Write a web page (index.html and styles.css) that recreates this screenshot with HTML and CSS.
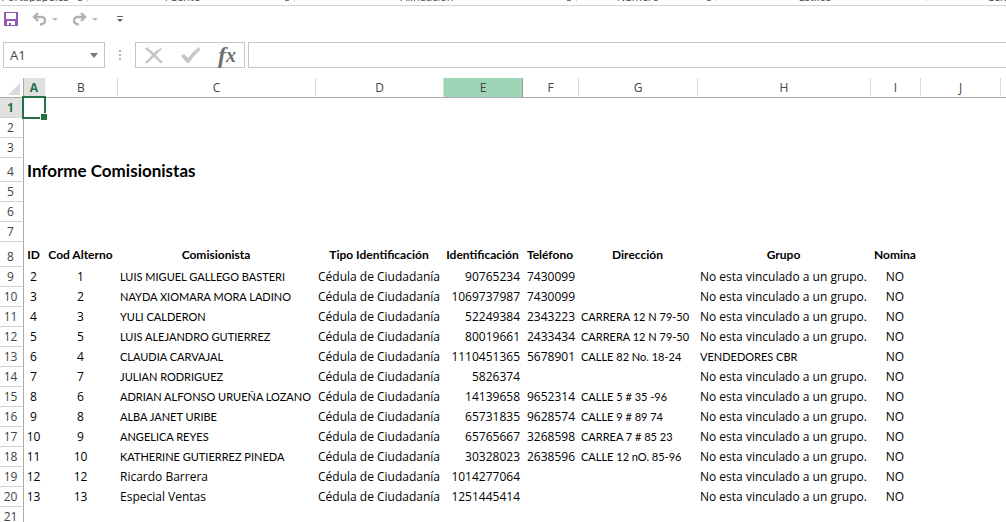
FILE: index.html
```
<!DOCTYPE html>
<html lang="es">
<head>
<meta charset="utf-8">
<title>Informe Comisionistas</title>
<link rel="stylesheet" href="styles.css">
</head>
<body>
<div class="ribbon">
  <div class="group"><span class="label">Portapapeles</span><i class="launcher"></i></div>
  <div class="group"><span class="label">Fuente</span><i class="launcher"></i></div>
  <div class="group"><span class="label">Alineación</span><i class="launcher"></i></div>
  <div class="group"><span class="label">Número</span><i class="launcher"></i></div>
  <div class="group"><span class="label">Estilos</span></div>
  <div class="group"><span class="label">Celdas</span></div>
</div>

<div class="quick">
  <button class="save" aria-label="Guardar"><svg width="14" height="14" viewBox="0 0 14 14"><path fill="#8e5bb0" fill-rule="evenodd" d="M0 0H14V14H0ZM2 1V7H12V1ZM3 9V13H5V11H7V13H11V9Z"/></svg></button>
  <button class="undo" aria-label="Deshacer"><svg width="15" height="14" viewBox="0 0 15 14"><path fill="none" stroke="#b1b1b1" stroke-width="2.400" d="M6 1L2 5L6 9M2 5H9Q13 5 13 8.500Q13 12 8 12.500"/></svg></button>
  <button class="drop" aria-label="Opciones de deshacer"><svg width="6" height="3" viewBox="0 0 6 3"><path fill="#b8b8b8" d="M0 0H6L3 3Z"/></svg></button>
  <button class="redo" aria-label="Rehacer"><svg width="15" height="14" viewBox="0 0 15 14"><path fill="none" stroke="#b1b1b1" stroke-width="2.400" d="M9 1L13 5L9 9M13 5H6Q2 5 2 8.500Q2 12 7 12.500"/></svg></button>
  <button class="drop" aria-label="Opciones de rehacer"><svg width="6" height="3" viewBox="0 0 6 3"><path fill="#b8b8b8" d="M0 0H6L3 3Z"/></svg></button>
  <button class="more" aria-label="Personalizar barra"><svg width="6" height="6" viewBox="0 0 6 6"><path fill="#666" d="M0 0H6V1H0ZM0 3H6L3 6Z"/></svg></button>
</div>

<div class="formula">
  <div class="namebox">
    <input aria-label="Cuadro de nombres" value="A1">
    <button aria-label="Lista de nombres"><svg width="8" height="5" viewBox="0 0 8 5"><path fill="#777" d="M0 0H8L4 5Z"/></svg></button>
  </div>
  <svg class="grip" width="2" height="10" viewBox="0 0 2 10"><path fill="#b0b0b0" d="M0 0H2V2H0ZM0 4H2V6H0ZM0 8H2V10H0Z"/></svg>
  <div class="actions">
    <button aria-label="Cancelar"><svg width="18" height="17" viewBox="0 0 18 17"><path fill="#c6c6c6" d="M2 0Q5 3 9 6Q13 2 16 1L17 2Q13 5 11 8Q14 12 18 15L16 16.500Q12 13 9 10Q5 14 2 16.500L0 15Q4 12 7 8Q4 5 0 2Z"/></svg></button>
    <button aria-label="Introducir"><svg width="19" height="16" viewBox="0 0 19 16"><path fill="#c6c6c6" d="M0 9L3 7L7 11Q12 4 18 0L19 3Q13 8 8 16H6Z"/></svg></button>
    <button class="fx" aria-label="Insertar función"><i>f</i><i class="x">x</i></button>
  </div>
  <input class="entry" aria-label="Barra de fórmulas">
</div>

<table class="sheet">
  <colgroup><col class="n"><col class="a"><col class="b"><col class="c"><col class="d"><col class="e"><col class="f"><col class="g"><col class="h"><col class="i"><col class="j"><col></colgroup>
  <thead>
    <tr><th class="corner"><svg width="12" height="12" viewBox="0 0 12 12"><path fill="#dadada" d="M12 0V12H0Z"/></svg></th><th class="active">A</th><th>B</th><th>C</th><th>D</th><th class="hover">E</th><th>F</th><th>G</th><th>H</th><th>I</th><th>J</th><th></th></tr>
  </thead>
  <tbody>
    <tr><th class="active">1</th><td class="selected"><span class="cursor"></span></td><td colspan="10"></td></tr>
    <tr><th>2</th><td colspan="11"></td></tr>
    <tr><th>3</th><td colspan="11"></td></tr>
    <tr class="title"><th>4</th><td colspan="11">Informe Comisionistas</td></tr>
    <tr><th>5</th><td colspan="11"></td></tr>
    <tr><th>6</th><td colspan="11"></td></tr>
    <tr><th>7</th><td colspan="11"></td></tr>
    <tr class="heads"><th>8</th><td>ID</td><td>Cod Alterno</td><td>Comisionista</td><td>Tipo Identificación</td><td>Identificación</td><td>Teléfono</td><td>Dirección</td><td>Grupo</td><td>Nomina</td><td></td><td></td></tr>
    <tr><th>9</th><td>2</td><td>1</td><td class="caps">LUIS MIGUEL GALLEGO BASTERI</td><td>Cédula de Ciudadanía</td><td>90765234</td><td>7430099</td><td></td><td>No esta vinculado a un grupo.</td><td>NO</td><td></td><td></td></tr>
    <tr><th>10</th><td>3</td><td>2</td><td class="caps">NAYDA XIOMARA MORA LADINO</td><td>Cédula de Ciudadanía</td><td>1069737987</td><td>7430099</td><td></td><td>No esta vinculado a un grupo.</td><td>NO</td><td></td><td></td></tr>
    <tr><th>11</th><td>4</td><td>3</td><td class="caps">YULI CALDERON</td><td>Cédula de Ciudadanía</td><td>52249384</td><td>2343223</td><td class="caps">CARRERA 12 N 79-50</td><td>No esta vinculado a un grupo.</td><td>NO</td><td></td><td></td></tr>
    <tr><th>12</th><td>5</td><td>5</td><td class="caps">LUIS ALEJANDRO GUTIERREZ</td><td>Cédula de Ciudadanía</td><td>80019661</td><td>2433434</td><td class="caps">CARRERA 12 N 79-50</td><td>No esta vinculado a un grupo.</td><td>NO</td><td></td><td></td></tr>
    <tr><th>13</th><td>6</td><td>4</td><td class="caps">CLAUDIA CARVAJAL</td><td>Cédula de Ciudadanía</td><td>1110451365</td><td>5678901</td><td class="caps">CALLE 82 No. 18-24</td><td class="caps">VENDEDORES CBR</td><td>NO</td><td></td><td></td></tr>
    <tr><th>14</th><td>7</td><td>7</td><td class="caps">JULIAN RODRIGUEZ</td><td>Cédula de Ciudadanía</td><td>5826374</td><td></td><td></td><td>No esta vinculado a un grupo.</td><td>NO</td><td></td><td></td></tr>
    <tr><th>15</th><td>8</td><td>6</td><td class="caps">ADRIAN ALFONSO URUEÑA LOZANO</td><td>Cédula de Ciudadanía</td><td>14139658</td><td>9652314</td><td class="caps">CALLE 5 # 35 -96</td><td>No esta vinculado a un grupo.</td><td>NO</td><td></td><td></td></tr>
    <tr><th>16</th><td>9</td><td>8</td><td class="caps">ALBA JANET URIBE</td><td>Cédula de Ciudadanía</td><td>65731835</td><td>9628574</td><td class="caps">CALLE 9 # 89 74</td><td>No esta vinculado a un grupo.</td><td>NO</td><td></td><td></td></tr>
    <tr><th>17</th><td>10</td><td>9</td><td class="caps">ANGELICA REYES</td><td>Cédula de Ciudadanía</td><td>65765667</td><td>3268598</td><td class="caps">CARREA 7 # 85 23</td><td>No esta vinculado a un grupo.</td><td>NO</td><td></td><td></td></tr>
    <tr><th>18</th><td>11</td><td>10</td><td class="caps">KATHERINE GUTIERREZ PINEDA</td><td>Cédula de Ciudadanía</td><td>30328023</td><td>2638596</td><td class="caps">CALLE 12 nO. 85-96</td><td>No esta vinculado a un grupo.</td><td>NO</td><td></td><td></td></tr>
    <tr><th>19</th><td>12</td><td>12</td><td>Ricardo Barrera</td><td>Cédula de Ciudadanía</td><td>1014277064</td><td></td><td></td><td>No esta vinculado a un grupo.</td><td>NO</td><td></td><td></td></tr>
    <tr><th>20</th><td>13</td><td>13</td><td>Especial Ventas</td><td>Cédula de Ciudadanía</td><td>1251445414</td><td></td><td></td><td>No esta vinculado a un grupo.</td><td>NO</td><td></td><td></td></tr>
    <tr><th>21</th><td colspan="11"></td></tr>
  </tbody>
</table>
</body>
</html>
```
FILE: styles.css
```
* { box-sizing: border-box; }
html { height: 100%; overflow: hidden; }
body { margin: 0; height: 100%; overflow: hidden; background: #fff; color: #000; font: 12px/16px "Open Sans", sans-serif; }
button, input { margin: 0; padding: 0; border: 0; background: none; font: inherit; color: inherit; }
button { display: flex; align-items: center; justify-content: center; }
svg { display: block; flex: none; }

/* Lower edge of the scrolled ribbon */
.ribbon { display: grid; grid-template-columns: 88px 207px 282px 140px 210px 1fr; height: 6px; border-bottom: 1px solid #d4d4d4; overflow: hidden; font: 11px/12px "Open Sans", sans-serif; color: #444; }
.group { display: flex; height: 2px; overflow: hidden; border-right: 1px solid #ddd; padding-right: 5px; }
.group:last-child { border: 0; padding-left: 60px; }
.label { flex: 1; margin-top: -9px; height: 12px; padding-right: 8px; text-align: center; white-space: nowrap; }
.group:last-child .label { flex: none; }
.launcher { width: 4px; height: 1px; background: #777; }

.quick { display: flex; align-items: center; height: 35px; padding: 0 0 9px 4px; }
.undo { margin-left: 14px; }
.drop { margin-left: 5px; }
.redo { margin-left: 14px; }
.more { margin-left: 19px; }

.formula { display: flex; align-items: center; height: 26px; padding-left: 3px; margin: 1px 0 10px; }
.namebox { display: flex; align-items: center; width: 102px; height: 26px; border: 1px solid #c6c6c6; padding: 0 6px; }
.namebox input { flex: 1; min-width: 0; font-size: 13px; color: #444; }
.grip { margin: 0 14px; }
.actions { display: flex; align-items: center; gap: 18px; width: 110px; height: 26px; border: 1px solid #c6c6c6; padding: 0 9px; }
.fx { font: bold 24px/24px "Liberation Serif", serif; color: #707070; }
.fx .x { font-size: 20px; }
.entry { flex: 1; min-width: 0; height: 26px; margin-left: 3px; border: 1px solid #c6c6c6; border-right: 0; }

.sheet { width: 100%; table-layout: fixed; border-collapse: separate; border-spacing: 0; }
.n { width: 24px; }
.a { width: 21px; }
.b { width: 73px; }
.c { width: 198px; }
.d { width: 128px; }
.e { width: 79px; }
.f { width: 56px; }
.g { width: 119px; }
.h { width: 173px; }
.i { width: 50px; }
.j { width: 80px; }

.sheet tr { height: 20px; }
.sheet th { padding: 0; font-size: 12px; font-weight: normal; line-height: 18px; color: #444; text-align: center; }
.sheet td { padding: 0 2px; line-height: 16px; white-space: nowrap; }
.sheet thead th { border-bottom: 1px solid #ababab; border-right: 1px solid #d8d8d8; }
.sheet thead th:last-child { border-right: 0; }
.sheet tbody th { padding: 1px 2px 0 0; border-right: 1px solid #ababab; border-bottom: 1px solid #d4d4d4; }
.sheet thead .corner { border-right-color: #ababab; }
.sheet .corner svg { margin: 3px 0 0 8px; }
.sheet th.active { background: #e1e1e1; color: #217346; font-weight: bold; }
.sheet thead th.hover { background: #9fd5b7; border-right-color: #999; }
.title { font: bold 17px/20px Lato, sans-serif; }
.sheet .title { height: 24px; }
.sheet .title td { padding: 2px 0 0 3px; line-height: 20px; }
.sheet .heads { height: 25px; text-align: center; font-family: Lato, sans-serif; font-weight: bold; }
.sheet .title th, .sheet .heads th { font-family: "Open Sans", sans-serif; }
.sheet .title th { padding-top: 4px; }
.sheet .heads th { padding-top: 5px; }
.sheet .caps { font-family: Lato, sans-serif; font-size: 11px; }
.sheet td:nth-child(2), .sheet td:nth-child(3), .sheet td:nth-child(10) { padding: 0 2px 0 0; text-align: center; }
.sheet .title td:nth-child(2) { padding: 2px 0 0 3px; text-align: left; }
.sheet tr:not(.heads) td:nth-child(6) { padding-right: 3px; text-align: right; }
.sheet tr:not(.heads) td:nth-child(7) { padding-left: 4px; }
.sheet .heads td { padding: 0 2px 0 0; }

.selected { position: relative; }
.cursor { position: absolute; inset: -2px -1px -1px -2px; border: 2px solid #217346; }
.cursor::after { content: ""; position: absolute; right: -3px; bottom: -3px; width: 6px; height: 6px; background: #217346; border: solid #fff; border-width: 1px 0 0 1px; }
```
